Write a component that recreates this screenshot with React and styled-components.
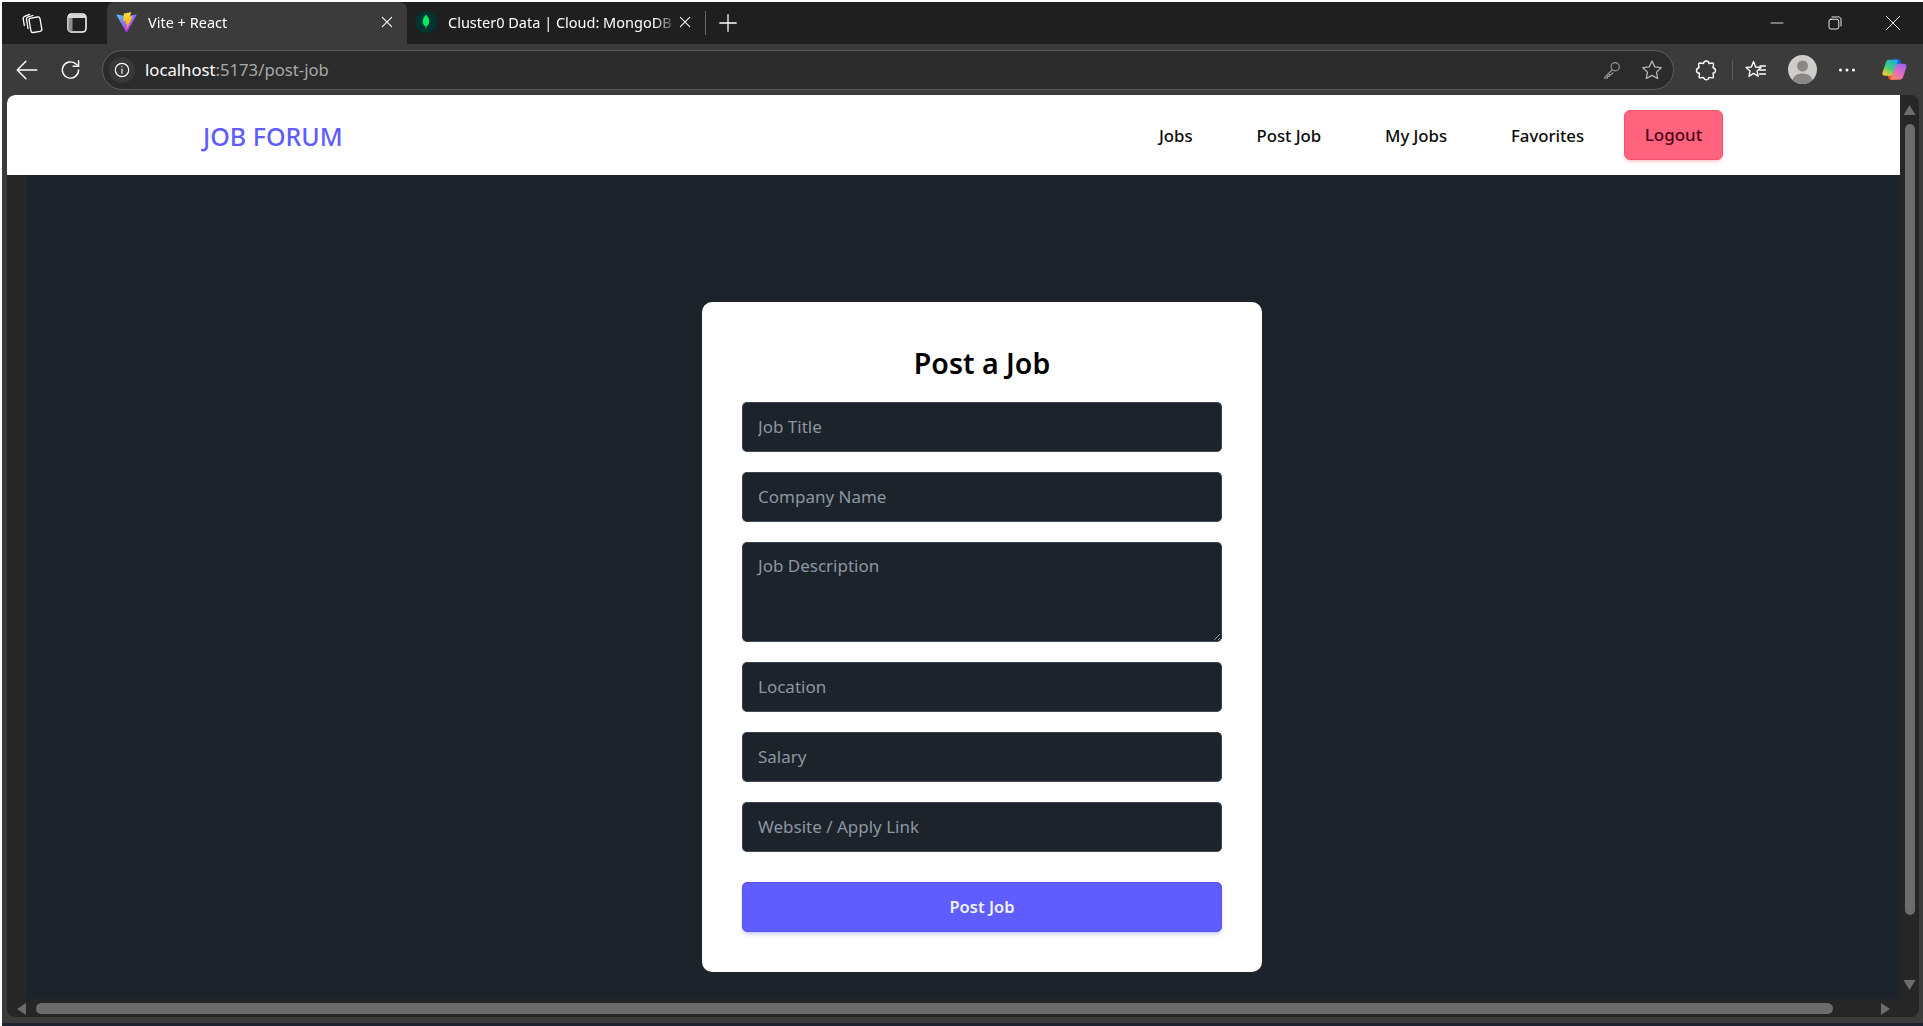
import React from "react"
import styled, { createGlobalStyle } from "styled-components"

const UI_FONT = `"Noto Sans", "Open Sans", "Liberation Sans", sans-serif`

const GlobalStyle = createGlobalStyle`
  html, body {
    margin: 0;
    padding: 0;
    background: #fff;
  }
  * {
    box-sizing: border-box;
  }
`

const Shell = styled.div`
  width: 1923px;
  height: 1026px;
  padding: 2px 0 0 2px;
  overflow: hidden;
  display: flex;
  flex-direction: column;
  font-family: ${UI_FONT};
  background: #fff;
`

// browser chrome
const TabStrip = styled.div`
  height: 42px;
  flex: none;
  display: flex;
  align-items: stretch;
  background: #1f1f1f;
  color: #fff;
`

const StripIcons = styled.div`
  width: 105px;
  padding-left: 18px;
  display: flex;
  align-items: center;
  gap: 22px;
`

const Tab = styled.div`
  width: ${p => p.$width}px;
  display: flex;
  align-items: center;
  padding: 0 12px 2px ${p => p.$left}px;
  border-radius: 8px 8px 0 0;
  background: ${p => (p.$active ? "#3b3b3b" : "transparent")};
  font-size: 14.5px;
`

const TabTitle = styled.span`
  flex: 1;
  margin-left: 11px;
  white-space: nowrap;
  overflow: hidden;
  -webkit-mask-image: linear-gradient(to right, #000 90%, transparent);
  mask-image: linear-gradient(to right, #000 90%, transparent);
`

const TabSep = styled.div`
  width: 1px;
  height: 24px;
  align-self: center;
  background: #6a6a6a;
`

const NewTab = styled.div`
  margin-left: 11px;
  display: flex;
  align-items: center;
`

const WindowButtons = styled.div`
  margin-left: auto;
  display: flex;
  align-items: center;
  gap: 40px;
  padding-right: 21px;
`

const Toolbar = styled.div`
  height: 51px;
  flex: none;
  display: flex;
  align-items: center;
  padding-left: 12px;
  background: #3b3b3b;
  color: #fff;
`

const NavIcons = styled.div`
  width: 88px;
  display: flex;
  align-items: center;
  gap: 18px;
`

const AddressBar = styled.div`
  width: 1572px;
  height: 40px;
  display: flex;
  align-items: center;
  padding: 0 9px 0 6px;
  border: 1px solid #5c5c5c;
  border-radius: 20px;
  background: #2b2b2b;
`

const InfoBadge = styled.div`
  width: 26px;
  height: 26px;
  display: flex;
  align-items: center;
  justify-content: center;
  border-radius: 50%;
  background: #383838;
`

const Url = styled.div`
  margin-left: 10px;
  font-size: 16.7px;
  color: #fff;
  span {
    color: #a8a8a8;
  }
`

const AddressActions = styled.div`
  margin-left: auto;
  display: flex;
  align-items: center;
  gap: 17px;
`

const ToolIcons = styled.div`
  flex: 1;
  display: flex;
  align-items: center;
  padding-left: 20px;
`

const ToolSep = styled.div`
  width: 1px;
  height: 20px;
  margin: 0 11px 0 14px;
  background: #5c5c5c;
`

const Avatar = styled.div`
  margin: 0 21px 0 20px;
  display: flex;
`

const Dots = styled.div`
  margin-right: 25px;
  display: flex;
`

// the tab viewport with its scrollbars
const ViewportFrame = styled.div`
  height: 928px;
  flex: none;
  padding: 0 4px 6px 5px;
  background: #3b3b3b;
`

const Viewport = styled.div`
  height: 922px;
  display: flex;
  flex-direction: column;
  overflow: hidden;
  border-radius: 8px;
  background: #262626;
`

const ViewportRow = styled.div`
  height: 904px;
  display: flex;
`

const Page = styled.div`
  width: 1893px;
  display: flex;
  flex-direction: column;
`

const VScroll = styled.div`
  width: 19px;
  padding-top: 10px;
  display: flex;
  flex-direction: column;
  align-items: center;
`

const VThumb = styled.div`
  width: 10px;
  height: 791px;
  margin: 9px 0 65px;
  border-radius: 5px;
  background: #6c6c6c;
`

const HScroll = styled.div`
  height: 18px;
  padding: 4px 0 0 10px;
  display: flex;
  align-items: flex-start;
`

const HThumb = styled.div`
  width: 1797px;
  height: 11px;
  margin: 0 48px 0 10px;
  border-radius: 6px;
  background: #6c6c6c;
`

const Arrow = styled.div`
  width: ${p => (p.$horizontal ? 9 : 12)}px;
  height: ${p => (p.$horizontal ? 12 : 10)}px;
  flex: none;
  background: #6c6c6c;
  clip-path: ${p =>
    ({
      up: "polygon(50% 0, 100% 100%, 0 100%)",
      down: "polygon(0 0, 100% 0, 50% 100%)",
      left: "polygon(100% 0, 100% 100%, 0 50%)",
      right: "polygon(0 0, 100% 50%, 0 100%)"
    }[p.$dir])};
`

// the app itself
const Navbar = styled.nav`
  height: 80px;
  flex: none;
  display: flex;
  align-items: center;
  justify-content: space-between;
  padding: 0 177px 0 196px;
  background: #fff;
  border-top-left-radius: 8px;
`

const Brand = styled.a`
  padding-top: 1px;
  font-size: 25px;
  font-weight: 500;
  color: #605dff;
`

const NavLinks = styled.div`
  display: flex;
  align-items: center;
  gap: 20px;
`

const NavLink = styled.a`
  padding: 0 22px;
  font-size: 16.8px;
  font-weight: 500;
  letter-spacing: -0.05px;
  color: #0b0b0b;
`

const LogoutButton = styled.button`
  width: 99px;
  height: 50px;
  margin-left: -2px;
  padding-bottom: 2px;
  border: 1px solid #f0566f;
  border-radius: 6px;
  background: #ff637d;
  box-shadow: 0 3px 4px -2px rgba(255, 99, 125, 0.5);
  font-family: inherit;
  font-size: 17px;
  font-weight: 500;
  color: #4d0218;
`

const Body = styled.div`
  flex: 1;
  display: flex;
`

const Gutter = styled.div`
  width: 20px;
  background: #262626;
`

const Main = styled.main`
  flex: 1;
  display: flex;
  justify-content: center;
  padding: 127px 0 0 37px;
  background: #1d232a;
`

const Card = styled.form`
  width: 560px;
  height: 670px;
  padding: 40px;
  display: flex;
  flex-direction: column;
  gap: 20px;
  border-radius: 10px;
  background: #fff;
`

const Title = styled.h2`
  height: 40px;
  margin: 0;
  font-size: 28.5px;
  font-weight: 600;
  line-height: 42px;
  text-align: center;
  color: #000;
`

const Field = styled.input`
  width: 480px;
  height: 50px;
  flex: none;
  padding: 0 15px 2px;
  border: 1px solid #3d434c;
  border-bottom-color: #454b55;
  border-radius: 5px;
  outline: none;
  background: #1d232a;
  font-family: inherit;
  font-size: 17px;
  color: #fff;
  &::placeholder {
    color: #8c96a3;
    opacity: 1;
  }
`

const TextField = styled(Field).attrs({ as: "textarea" })`
  height: 100px;
  padding: 12px 15px;
  resize: vertical;
  line-height: 22px;
`

const SubmitButton = styled.button`
  width: 480px;
  height: 50px;
  flex: none;
  margin-top: 10px;
  padding-bottom: 2px;
  border: 1px solid #5754ee;
  border-radius: 5px;
  background: #605dff;
  box-shadow: 0 3px 5px -2px rgba(96, 93, 255, 0.5);
  font-family: inherit;
  font-size: 16.5px;
  font-weight: 600;
  color: #edf1fe;
`

const BottomEdge = styled.div`
  flex: 1;
  background: #1d2330;
`

const Stroke = ({ size = 24, width = 1.4, children, color = "#fff" }) => (
  <svg
    width={size}
    height={size}
    viewBox="0 0 24 24"
    fill="none"
    stroke={color}
    strokeWidth={width}
    strokeLinecap="round"
    strokeLinejoin="round"
  >
    {children}
  </svg>
)

const ViteLogo = () => (
  <svg width="21" height="21" viewBox="0 0 410 404">
    <defs>
      <linearGradient id="viteA" x1="6" y1="33" x2="235" y2="344" gradientUnits="userSpaceOnUse">
        <stop stopColor="#41D1FF" />
        <stop offset="1" stopColor="#BD34FE" />
      </linearGradient>
      <linearGradient id="viteB" x1="194" y1="8" x2="236" y2="293" gradientUnits="userSpaceOnUse">
        <stop stopColor="#FFEA83" />
        <stop offset="0.08" stopColor="#FFDD35" />
        <stop offset="1" stopColor="#FFA800" />
      </linearGradient>
    </defs>
    <path
      fill="url(#viteA)"
      d="M399.6 59.5 215.9 388.2c-3.8 6.8-13.5 6.8-17.4.1L11.1 59.5c-4.2-7.4 2.1-16.3 10.4-14.8l183.9 32.9c1.2.2 2.4.2 3.5 0l180-32.8c8.3-1.5 14.7 7.3 10.6 14.7z"
    />
    <path
      fill="url(#viteB)"
      d="M292.9 1.6 156.9 28.2c-2.2.4-3.9 2.3-4 4.6l-8.4 141.4c-.2 3.3 2.8 5.9 6.1 5.1l37.9-8.7c3.5-.8 6.7 2.3 6 5.9l-11.3 55.1c-.8 3.7 2.7 6.9 6.3 5.8l23.4-7.1c3.6-1.1 7.1 2.1 6.3 5.8l-17.9 86.4c-1.1 5.4 6.1 8.4 9.1 3.7l2-3.1L323.7 88c1.9-3.7-1.3-7.9-5.4-7.1l-39 7.5c-3.7.7-6.8-2.7-5.8-6.3l25.5-88.3c1-3.7-2.2-7.1-6-6.3z"
    />
  </svg>
)

const MongoLeaf = () => (
  <svg width="22" height="22" viewBox="0 0 22 22">
    <circle cx="11" cy="11" r="11" fill="#023430" />
    <path
      d="M11 3.500c2.400 2.800 3.400 5 3.200 7.200-.2 2.200-1.400 3.900-2.800 4.900l-.2 2.400h-.5l-.2-2.400c-1.500-1-2.700-2.700-2.800-4.900C7.500 8.500 8.600 6.300 11 3.500z"
      fill="#00ed64"
    />
  </svg>
)

const CopilotLogo = () => (
  <svg width="27" height="27" viewBox="0 0 28 28">
    <defs>
      <linearGradient id="copA" x1="14" y1="3" x2="5" y2="20" gradientUnits="userSpaceOnUse">
        <stop stopColor="#1fa8ee" />
        <stop offset="0.55" stopColor="#3fcf7a" />
        <stop offset="1" stopColor="#f7d02c" />
      </linearGradient>
      <linearGradient id="copB" x1="23" y1="8" x2="14" y2="25" gradientUnits="userSpaceOnUse">
        <stop stopColor="#9a62f0" />
        <stop offset="0.55" stopColor="#e56bc4" />
        <stop offset="1" stopColor="#fb8a5c" />
      </linearGradient>
    </defs>
    <path fill="#1f5fd8" d="M13 3h4c2 0 3 1 3.500 3l1.500 5h-6z" />
    <path fill="#e8562f" d="M7 17h5l2 8h-3c-2 0-3-1-3.500-3z" />
    <path
      fill="url(#copA)"
      d="M8 4h8c1.500 0 2 1 1.500 2.300L13 18c-.6 1.500-1.600 2.500-3.500 2.500H4.500C2 20.500 1 19 1.600 17L5 7c.6-2 1.500-3 3-3z"
    />
    <path
      fill="url(#copB)"
      d="M18.500 8H24c2 0 3 1.500 2.400 3.500L23 21.500c-.6 2-2 3-4 3h-7c-1.500 0-2-1-1.500-2.300L15 11c.6-2 1.600-3 3.500-3z"
    />
  </svg>
)

const CloseIcon = () => (
  <Stroke size={16} width={1.6}>
    <path d="M5 5l14 14M19 5 5 19" />
  </Stroke>
)

const Chrome = () => (
  <>
    <TabStrip>
      <StripIcons>
        <Stroke size={24} width={1.3}>
          <rect x="10" y="6.500" width="11" height="14.500" rx="2" transform="rotate(-10 15.500 14)" />
          <path d="M8 17.500 6.500 8.500c-.2-1.200.4-2.200 1.600-2.600L13 4.500" />
          <path d="M4.300 14.500 3.200 8c-.2-1.200.3-2.100 1.400-2.600L9.500 3.300" />
        </Stroke>
        <svg width="22" height="22" viewBox="0 0 22 22">
          <rect x="2" y="2" width="18" height="18" rx="3.500" fill="none" stroke="#fff" strokeWidth="1.500" />
          <path d="M2.500 6V5.500a3 3 0 0 1 3-3h11a3 3 0 0 1 3 3V6z" fill="#d8d8d8" />
          <path d="M2.500 6v13.500h4V6z" fill="#8c8c8c" />
        </svg>
      </StripIcons>
      <Tab $active $width={300} $left={9}>
        <ViteLogo />
        <TabTitle>Vite + React</TabTitle>
        <CloseIcon />
      </Tab>
      <Tab $width={298} $left={8}>
        <MongoLeaf />
        <TabTitle>Cluster0 Data | Cloud: MongoDB Cloud</TabTitle>
        <CloseIcon />
      </Tab>
      <TabSep />
      <NewTab>
        <Stroke size={22} width={1.4}>
          <path d="M12 3v18M3 12h18" />
        </Stroke>
      </NewTab>
      <WindowButtons>
        <Stroke size={18} width={1.1}>
          <path d="M4 12h16" />
        </Stroke>
        <Stroke size={18} width={1.2}>
          <rect x="4" y="7" width="13" height="13" rx="2.500" />
          <path d="M8 4h9c1.800 0 3 1.200 3 3v9" />
        </Stroke>
        <Stroke size={18} width={1.2}>
          <path d="M3 3l18 18M21 3 3 21" />
        </Stroke>
      </WindowButtons>
    </TabStrip>
    <Toolbar>
      <NavIcons>
        <Stroke size={26} width={1.3}>
          <path d="M21 12H3M11 4l-8 8 8 8" />
        </Stroke>
        <Stroke size={26} width={1.3}>
          <path d="M19 12a7.500 7.500 0 1 1-2.400-5.500L19 8.500" />
          <path d="M19 3.500v5h-5" />
        </Stroke>
      </NavIcons>
      <AddressBar>
        <InfoBadge>
          <Stroke size={20} width={1.4}>
            <circle cx="12" cy="12" r="8" />
            <path d="M12 11v5M12 8v.100" />
          </Stroke>
        </InfoBadge>
        <Url>
          localhost<span>:5173/post-job</span>
        </Url>
        <AddressActions>
          <Stroke size={22} width={1.2} color="#9a9a9a">
            <circle cx="15.500" cy="8.500" r="4.500" />
            <path d="M12 12l-8 8v1h3v-2h2v-2h2l2-2" />
          </Stroke>
          <Stroke size={24} width={1.3} color="#b5b5b5">
            <path d="m12 3 2.800 5.900 6.400.8-4.700 4.400 1.200 6.400L12 17.400l-5.700 3.100 1.200-6.400-4.700-4.400 6.400-.8z" />
          </Stroke>
        </AddressActions>
      </AddressBar>
      <ToolIcons>
        <Stroke size={24} width={1.4}>
          <path d="M9.500 5.500C9.800 3.800 11 3 12.300 3c1.400 0 2.400.9 2.700 2.500l3.200-.5c.9 0 1.400.6 1.300 1.500l-.5 3.200c1.700.3 2.500 1.400 2.500 2.800 0 1.500-1 2.500-2.500 2.800l.5 3.200c.1.900-.5 1.500-1.400 1.400l-3.100-.5c-.3 1.500-1.300 2.400-2.700 2.400s-2.400-.9-2.700-2.400l-3.200.5c-.9.100-1.400-.5-1.300-1.400l.4-3.200C3.600 15.100 2.500 14 2.500 12.500S3.600 10 5 9.700l-.4-3.200C4.500 5.600 5.100 5 6 5z" />
        </Stroke>
        <ToolSep />
        <Stroke size={24} width={1.3}>
          <path d="M9.500 3.500 11.600 9l5.400.4-4 3.500 1.200 5.400-4.700-2.900-4.600 3 1.200-5.500L2 9.400 7.400 9z" />
          <path d="M16 8h5.500M15.500 12h6M15.500 16h6" />
        </Stroke>
        <Avatar>
          <svg width="29" height="29" viewBox="0 0 29 29">
            <circle cx="14.500" cy="14.500" r="14.500" fill="#cfcdc9" />
            <circle cx="14.500" cy="11" r="5.500" fill="#8a8886" />
            <path d="M4.500 25c1.500-4.500 5-6.500 10-6.500s8.500 2 10 6.500a14.500 14.500 0 0 1-20 0z" fill="#8a8886" />
          </svg>
        </Avatar>
        <Dots>
          <svg width="18" height="6" viewBox="0 0 18 6">
            <circle cx="2.500" cy="3" r="1.500" fill="#fff" />
            <circle cx="9" cy="3" r="1.500" fill="#fff" />
            <circle cx="15.500" cy="3" r="1.500" fill="#fff" />
          </svg>
        </Dots>
        <CopilotLogo />
      </ToolIcons>
    </Toolbar>
  </>
)

const links = ["Jobs", "Post Job", "My Jobs", "Favorites"]

const App = () => (
  <Shell>
    <GlobalStyle />
    <Chrome />
    <ViewportFrame>
      <Viewport>
        <ViewportRow>
          <Page>
            <Navbar>
              <Brand>JOB FORUM</Brand>
              <NavLinks>
                {links.map(link => (
                  <NavLink key={link}>{link}</NavLink>
                ))}
                <LogoutButton type="button">Logout</LogoutButton>
              </NavLinks>
            </Navbar>
            <Body>
              <Gutter />
              <Main>
                <Card onSubmit={e => e.preventDefault()}>
                  <Title>Post a Job</Title>
                  <Field placeholder="Job Title" />
                  <Field placeholder="Company Name" />
                  <TextField placeholder="Job Description" />
                  <Field placeholder="Location" />
                  <Field placeholder="Salary" />
                  <Field placeholder="Website / Apply Link" />
                  <SubmitButton type="submit">Post Job</SubmitButton>
                </Card>
              </Main>
            </Body>
          </Page>
          <VScroll>
            <Arrow $dir="up" />
            <VThumb />
            <Arrow $dir="down" />
          </VScroll>
        </ViewportRow>
        <HScroll>
          <Arrow $dir="left" $horizontal />
          <HThumb />
          <Arrow $dir="right" $horizontal />
        </HScroll>
      </Viewport>
    </ViewportFrame>
    <BottomEdge />
  </Shell>
)

export default App
